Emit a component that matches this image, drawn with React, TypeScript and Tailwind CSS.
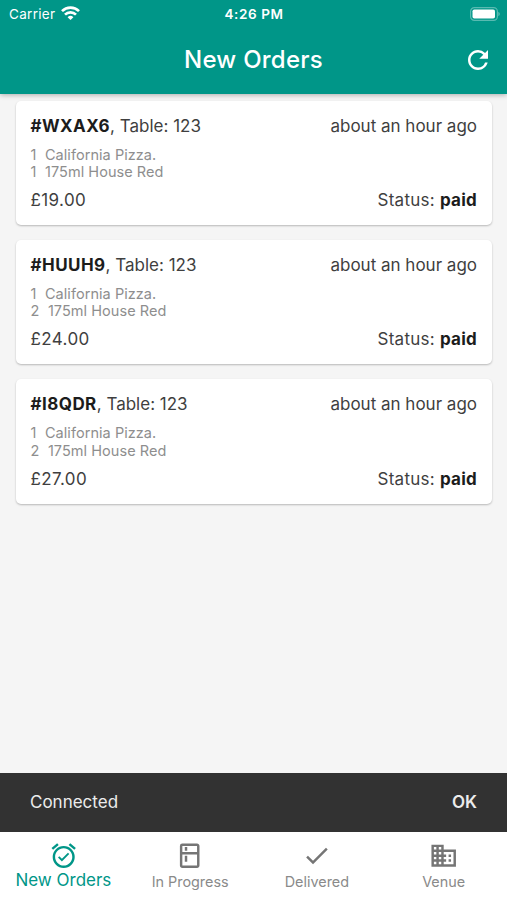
import React, { useState } from 'react';
import { MdBusiness, MdCheck, MdOutlineAlarmOn, MdOutlineKitchen, MdRefresh } from 'react-icons/md';

interface Order {
    code: string;
    table: string;
    placed: string;
    items: { qty: number; name: string }[];
    total: number;
    status: string;
}

const orders: Order[] = [
    {
        code: 'WXAX6',
        table: '123',
        placed: 'about an hour ago',
        items: [
            { qty: 1, name: 'California Pizza.' },
            { qty: 1, name: '175ml House Red' },
        ],
        total: 19,
        status: 'paid',
    },
    {
        code: 'HUUH9',
        table: '123',
        placed: 'about an hour ago',
        items: [
            { qty: 1, name: 'California Pizza.' },
            { qty: 2, name: '175ml House Red' },
        ],
        total: 24,
        status: 'paid',
    },
    {
        code: 'I8QDR',
        table: '123',
        placed: 'about an hour ago',
        items: [
            { qty: 1, name: 'California Pizza.' },
            { qty: 2, name: '175ml House Red' },
        ],
        total: 27,
        status: 'paid',
    },
];

const tabs = [
    { label: 'New Orders', Icon: MdOutlineAlarmOn },
    { label: 'In Progress', Icon: MdOutlineKitchen },
    { label: 'Delivered', Icon: MdCheck },
    { label: 'Venue', Icon: MdBusiness },
];

const StatusBar: React.FC = () => (
    <div className="grid h-[27px] grid-cols-3 items-center pl-[9px] pr-[7px] text-[13.5px]">
        <div className="flex items-center gap-[6px]">
            <span className="pt-px tracking-[0.3px]">Carrier</span>
            <svg width="19" height="15" viewBox="0 0 19 15" fill="none" stroke="currentColor" strokeWidth="2.7">
                <path d="M1 5.1a12.2 12.2 0 0 1 17 0" />
                <path d="M4 8.6a7.8 7.8 0 0 1 11 0" />
                <path d="M9.5 14 6.6 11.3a4.1 4.1 0 0 1 5.8 0Z" fill="currentColor" stroke="none" />
            </svg>
        </div>
        <span className="pt-px pr-px text-center font-semibold tracking-[0.6px]">4:26 PM</span>
        <svg className="justify-self-end" width="30" height="14" viewBox="0 0 30 14">
            <rect x="0.6" y="0.6" width="26.8" height="12.8" rx="3.8" fill="none" stroke="white" strokeOpacity="0.35" strokeWidth="1.2" />
            <rect x="2.5" y="2.5" width="22.5" height="9" rx="1.8" fill="white" />
            <path d="M28.4 5v4c.9-.4 1.3-1.1 1.3-2s-.4-1.6-1.3-2Z" fill="white" fillOpacity="0.4" />
        </svg>
    </div>
);

const OrderCard: React.FC<{ order: Order }> = ({ order }) => (
    <div className="flex h-[124.5px] flex-col rounded-[5px] bg-white px-[14.5px] pt-[13px] text-[17px] leading-6 text-[#3f3f3f] shadow-[0_1px_2px_rgba(0,0,0,0.25)]">
        <div className="flex justify-between">
            <span className="pl-[0.5px]">
                <b className="font-bold tracking-[0.45px] text-[#1c1c1c]">#{order.code}</b>, Table: {order.table}
            </span>
            <span>{order.placed}</span>
        </div>
        <div className="mt-[8px] pl-[0.5px] text-[14.5px] leading-[17.2px] tracking-[0.05px] text-[#8e8e8e]">
            {order.items.map((item) => (
                <div key={item.name} className="flex gap-[8.5px]">
                    <span>{item.qty}</span>
                    <span>{item.name}</span>
                </div>
            ))}
        </div>
        <div className="mt-[8px] flex justify-between">
            <span className="pl-[0.5px] tracking-[0.4px]">£{order.total.toFixed(2)}</span>
            <span className="tracking-[0.25px]">
                Status: <b className="font-bold text-[#1c1c1c]">{order.status}</b>
            </span>
        </div>
    </div>
);

const App: React.FC = () => {
    const [active, setActive] = useState('New Orders');
    const [connected, setConnected] = useState(true);

    return (
        <div className="flex h-screen flex-col bg-[#f5f5f5] font-['Inter',sans-serif]">
            <header className="z-10 h-[94px] shrink-0 bg-[#009688] text-white shadow-[0_1px_5px_rgba(0,0,0,0.3)]">
                <StatusBar />
                <div className="grid h-[66px] grid-cols-[44px_1fr_44px] items-center">
                    <h1 className="col-start-2 text-center text-[24px] font-medium tracking-[0.25px]">New Orders</h1>
                    <button aria-label="Refresh">
                        <MdRefresh size={30} />
                    </button>
                </div>
            </header>

            <main className="flex flex-1 flex-col gap-[14.9px] px-[15.5px] pt-[6.6px]">
                {orders.map((order) => (
                    <OrderCard key={order.code} order={order} />
                ))}
            </main>

            {connected && (
                <div className="flex h-[59px] shrink-0 items-center justify-between bg-[#323232] px-[30px] text-[17px] text-[#ececec]">
                    <span>Connected</span>
                    <button className="font-semibold" onClick={() => setConnected(false)}>
                        OK
                    </button>
                </div>
            )}

            <nav className="grid h-[68px] shrink-0 grid-cols-4 bg-white">
                {tabs.map(({ label, Icon }) => (
                    <button
                        key={label}
                        onClick={() => setActive(label)}
                        className={`flex flex-col items-center pt-[9px] ${active === label ? 'text-[#009688]' : 'text-[#757575]'}`}
                    >
                        <Icon size={29.4} />
                        <span className={active === label ? 'text-[17px] leading-[21px]' : 'text-[14.4px] leading-[23px] text-[#8a8a8a]'}>
                            {label}
                        </span>
                    </button>
                ))}
            </nav>
        </div>
    );
};

export default App
